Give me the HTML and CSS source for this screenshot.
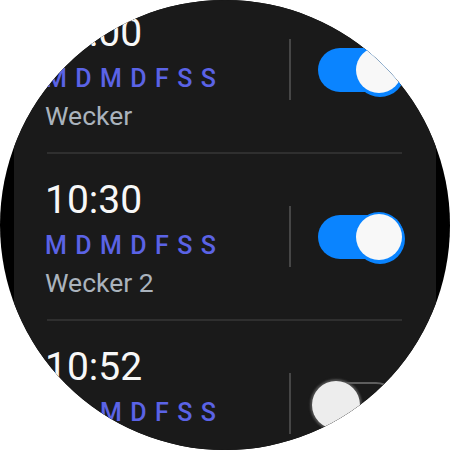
FILE: index.html
```html
<!DOCTYPE html>
<html>
<head>
<meta charset="utf-8">
<link rel="stylesheet" href="styles.css">
</head>
<body>
<div class="screen">
  <div class="content">
    <div class="list">
      <div class="item">
        <div class="text">
          <div class="time">10:00</div>
          <div class="days">MDMDFSS</div>
          <div class="label">Wecker</div>
        </div>
        <div class="sep"></div>
        <div class="toggle on"><div class="knob"></div></div>
      </div>
      <div class="divider"></div>
      <div class="item">
        <div class="text">
          <div class="time">10:30</div>
          <div class="days">MDMDFSS</div>
          <div class="label">Wecker 2</div>
        </div>
        <div class="sep"></div>
        <div class="toggle on"><div class="knob"></div></div>
      </div>
      <div class="divider"></div>
      <div class="item">
        <div class="text">
          <div class="time">10:52</div>
          <div class="days">MDMDFSS</div>
        </div>
        <div class="sep"></div>
        <div class="toggle off"><div class="knob"></div></div>
      </div>
    </div>
  </div>
</div>
</body>
</html>
```

FILE: styles.css
```css
html, body {
  margin: 0;
  padding: 0;
  background: #ffffff;
}
.screen {
  width: 450px;
  height: 450px;
  border-radius: 50%;
  background: #000000;
  overflow: hidden;
  font-family: Roboto, "Liberation Sans", sans-serif;
}
.content {
  margin: 0 14px;
  height: 450px;
  background: #1a1a1a;
  overflow: hidden;
}
.list {
  margin-top: -13px;
}
.item {
  height: 165px;
  display: flex;
  align-items: center;
  padding-left: 31px;
}
.text {
  width: 244px;
  height: 125px;
  display: flex;
  flex-direction: column;
}
.time {
  font-size: 39px;
  line-height: 52px;
  color: #f7f7f7;
}
.days {
  font-size: 25px;
  line-height: 40px;
  letter-spacing: 8.4px;
  color: #5b63e6;
  font-weight: 500;
}
.label {
  font-size: 26.5px;
  line-height: 33px;
  color: #aab3bd;
}
.sep {
  width: 1.5px;
  height: 61px;
  background: #464646;
}
.divider {
  height: 2px;
  margin: 0 34px 0 33px;
  background: #2f2f2f;
}
.toggle {
  position: relative;
  margin-left: 27px;
  width: 80px;
  height: 44px;
  border-radius: 22px;
  box-sizing: border-box;
}
.toggle.on {
  background: #0a84ff;
}
.toggle.off {
  border: 2px solid #5e5e5e;
}
.knob {
  position: absolute;
  width: 46px;
  height: 46px;
  border-radius: 50%;
  top: -1px;
}
.toggle.on .knob {
  right: -4px;
  background: #f8f8f8;
  box-shadow: 0 0 0 2px #0a84ff, 1px 2px 0 2px #0a84ff;
}
.toggle.off .knob {
  left: -8px;
  top: -3px;
  width: 48px;
  height: 48px;
  background: #ededed;
  box-shadow: 0 0 2px 2px rgba(90, 90, 90, 0.8);
}
```
